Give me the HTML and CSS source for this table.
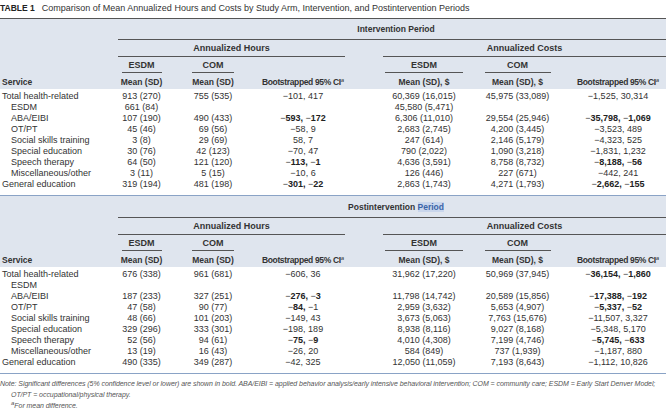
FILE: index.html
```html
<!DOCTYPE html>
<html lang="en">
<head>
<meta charset="utf-8">
<title>Table 1</title>
<link rel="stylesheet" href="styles.css">
</head>
<body>
<p class="title"><b class="tag">TABLE 1</b>Comparison of Mean Annualized Hours and Costs by Study Arm, Intervention, and Postintervention Periods</p>

<table class="tbl tbl-first">
  <colgroup>
    <col class="c-svc"><col class="c-eh"><col class="c-ch"><col class="c-ih"><col class="c-gap"><col class="c-ec"><col class="c-cc"><col class="c-ic">
  </colgroup>
  <thead>
    <tr class="r-period"><th></th><th colspan="7" class="per">Intervention Period</th></tr>
    <tr class="r-group"><th></th><th colspan="3" class="grp">Annualized Hours</th><th></th><th colspan="3" class="grp">Annualized Costs</th></tr>
    <tr class="r-arm"><th></th><th><div class="arm w-eh">ESDM</div></th><th><div class="arm w-ch">COM</div></th><th></th><th></th><th><div class="arm w-ec">ESDM</div></th><th><div class="arm w-cc">COM</div></th><th></th></tr>
    <tr class="r-col"><th class="svc">Service</th><th>Mean (SD)</th><th>Mean (SD)</th><th class="ci">Bootstrapped 95% CI<sup class="fn">a</sup></th><th></th><th>Mean (SD), $</th><th>Mean (SD), $</th><th class="ci">Bootstrapped 95% CI<sup class="fn">a</sup></th></tr>
  </thead>
  <tbody>
    <tr><td class="svc">Total health-related</td><td>913 (270)</td><td>755 (535)</td><td>−101, 417</td><td></td><td>60,369 (16,015)</td><td>45,975 (33,089)</td><td>−1,525, 30,314</td></tr>
    <tr><td class="svc sub">ESDM</td><td>661 (84)</td><td></td><td></td><td></td><td>45,580 (5,471)</td><td></td><td></td></tr>
    <tr><td class="svc sub">ABA/EIBI</td><td>107 (190)</td><td>490 (433)</td><td>−<b>593,</b> −<b>172</b></td><td></td><td>6,306 (11,010)</td><td>29,554 (25,946)</td><td>−<b>35,798,</b> −<b>1,069</b></td></tr>
    <tr><td class="svc sub">OT/PT</td><td>45 (46)</td><td>69 (56)</td><td>−58, 9</td><td></td><td>2,683 (2,745)</td><td>4,200 (3,445)</td><td>−3,523, 489</td></tr>
    <tr><td class="svc sub">Social skills training</td><td>3 (8)</td><td>29 (69)</td><td>58, 7</td><td></td><td>247 (614)</td><td>2,146 (5,179)</td><td>−4,323, 525</td></tr>
    <tr><td class="svc sub">Special education</td><td>30 (76)</td><td>42 (123)</td><td>−70, 47</td><td></td><td>790 (2,022)</td><td>1,090 (3,218)</td><td>−1,831, 1,232</td></tr>
    <tr><td class="svc sub">Speech therapy</td><td>64 (50)</td><td>121 (120)</td><td>−<b>113,</b> −<b>1</b></td><td></td><td>4,636 (3,591)</td><td>8,758 (8,732)</td><td>−<b>8,188,</b> −<b>56</b></td></tr>
    <tr><td class="svc sub">Miscellaneous/other</td><td>3 (11)</td><td>5 (15)</td><td>−10, 6</td><td></td><td>126 (446)</td><td>227 (671)</td><td>−442, 241</td></tr>
    <tr class="last"><td class="svc">General education</td><td>319 (194)</td><td>481 (198)</td><td>−<b>301,</b> −<b>22</b></td><td></td><td>2,863 (1,743)</td><td>4,271 (1,793)</td><td>−<b>2,662,</b> −<b>155</b></td></tr>
  </tbody>
</table>

<table class="tbl tbl-second">
  <colgroup>
    <col class="c-svc"><col class="c-eh"><col class="c-ch"><col class="c-ih"><col class="c-gap"><col class="c-ec"><col class="c-cc"><col class="c-ic">
  </colgroup>
  <thead>
    <tr class="r-period"><th></th><th colspan="7" class="per">Postintervention <span class="sel">Period</span></th></tr>
    <tr class="r-group"><th></th><th colspan="3" class="grp">Annualized Hours</th><th></th><th colspan="3" class="grp">Annualized Costs</th></tr>
    <tr class="r-arm"><th></th><th><div class="arm w-eh">ESDM</div></th><th><div class="arm w-ch">COM</div></th><th></th><th></th><th><div class="arm w-ec">ESDM</div></th><th><div class="arm w-cc">COM</div></th><th></th></tr>
    <tr class="r-col"><th class="svc">Service</th><th>Mean (SD)</th><th>Mean (SD)</th><th class="ci">Bootstrapped 95% CI<sup class="fn">a</sup></th><th></th><th>Mean (SD), $</th><th>Mean (SD), $</th><th class="ci">Bootstrapped 95% CI<sup class="fn">a</sup></th></tr>
  </thead>
  <tbody>
    <tr><td class="svc">Total health-related</td><td>676 (338)</td><td>961 (681)</td><td>−606, 36</td><td></td><td>31,962 (17,220)</td><td>50,969 (37,945)</td><td>−<b>36,154,</b> −<b>1,860</b></td></tr>
    <tr><td class="svc sub">ESDM</td><td></td><td></td><td></td><td></td><td></td><td></td><td></td></tr>
    <tr><td class="svc sub">ABA/EIBI</td><td>187 (233)</td><td>327 (251)</td><td>−<b>276,</b> −<b>3</b></td><td></td><td>11,798 (14,742)</td><td>20,589 (15,856)</td><td>−<b>17,388,</b> −<b>192</b></td></tr>
    <tr><td class="svc sub">OT/PT</td><td>47 (58)</td><td>90 (77)</td><td>−<b>84,</b> −1</td><td></td><td>2,959 (3,632)</td><td>5,653 (4,907)</td><td>−<b>5,337,</b> −<b>52</b></td></tr>
    <tr><td class="svc sub">Social skills training</td><td>48 (66)</td><td>101 (203)</td><td>−149, 43</td><td></td><td>3,673 (5,063)</td><td>7,763 (15,676)</td><td>−11,507, 3,327</td></tr>
    <tr><td class="svc sub">Special education</td><td>329 (296)</td><td>333 (301)</td><td>−198, 189</td><td></td><td>8,938 (8,116)</td><td>9,027 (8,168)</td><td>−5,348, 5,170</td></tr>
    <tr><td class="svc sub">Speech therapy</td><td>52 (56)</td><td>94 (61)</td><td>−<b>75,</b> −<b>9</b></td><td></td><td>4,010 (4,308)</td><td>7,199 (4,746)</td><td>−<b>5,745,</b> −<b>633</b></td></tr>
    <tr><td class="svc sub">Miscellaneous/other</td><td>13 (19)</td><td>16 (43)</td><td>−26, 20</td><td></td><td>584 (849)</td><td>737 (1,939)</td><td>−1,187, 880</td></tr>
    <tr class="last"><td class="svc">General education</td><td>490 (335)</td><td>349 (287)</td><td>−42, 325</td><td></td><td>12,050 (11,059)</td><td>7,193 (8,643)</td><td>−1,112, 10,826</td></tr>
  </tbody>
</table>

<div class="notes">
  <p class="note">Note: Significant differences (5% confidence level or lower) are shown in bold. ABA/EIBI = applied behavior analysis/early intensive behavioral intervention; COM = community care; ESDM = Early Start Denver Model;</p>
  <p class="note ind">OT/PT = occupational/physical therapy.</p>
  <p class="note ind"><sup class="fn">a</sup>For mean difference.</p>
</div>
</body>
</html>
```

FILE: styles.css
```css
html, body {
  margin: 0;
  padding: 0;
  background: #ffffff;
}

body {
  width: 666px;
  overflow: hidden;
  color: #2e2e2e;
  font-family: "Liberation Sans", Arial, sans-serif;
  font-size: 9px;
}

.title {
  margin: 0;
  height: 18px;
  line-height: 16px;
  white-space: nowrap;
  font-size: 9px;
  color: #333;
}

.tag {
  font-size: 8.5px;
  font-weight: bold;
  margin-right: 7px;
  color: #222;
}

.tbl {
  width: 666px;
  border-collapse: collapse;
  border-spacing: 0;
  table-layout: fixed;
}

.c-svc { width: 118px; }
.c-eh  { width: 47px; }
.c-ch  { width: 96px; }
.c-ih  { width: 84px; }
.c-gap { width: 38px; }
.c-ec  { width: 82px; }
.c-cc  { width: 105px; }
.c-ic  { width: 96px; }

.tbl th,
.tbl td {
  padding: 0;
  text-align: center;
  white-space: nowrap;
  overflow: visible;
}

.tbl thead th {
  background: #dfe5ee;
  font-weight: bold;
  color: #333;
}

.tbl-first thead tr:first-child th {
  border-top: 1px solid #555;
}

.r-period th { height: 20px; vertical-align: middle; }
.tbl-second .r-period th { height: 21px; }
.r-group th { height: 16px; vertical-align: middle; }
.r-arm th { height: 17px; vertical-align: bottom; }
.r-col th { height: 15px; vertical-align: middle; font-size: 8.5px; }

.tbl .ci {
  font-size: 8.5px;
  letter-spacing: -0.35px;
}

.per {
  font-size: 8.5px;
  padding-left: 8px;
  border-bottom: 1px solid #555;
}

.tbl .per {
  padding-left: 8px;
}

.grp {
  border-bottom: 1px solid #555;
}

.arm {
  margin: 0 auto 1px;
  padding-bottom: 2px;
  border-bottom: 1px solid #555;
  line-height: 10px;
}

.w-eh { width: 40px; }
.w-ch { width: 42px; }
.w-ec { width: 78px; }
.w-cc { width: 66px; }

.tbl .svc {
  text-align: left;
  padding-left: 2px;
}

.tbl td.sub {
  padding-left: 11px;
}

.tbl tbody td {
  height: 11px;
  line-height: 11px;
  color: #333;
}

.tbl tbody tr:first-child td {
  padding-top: 2px;
}

.tbl tbody tr.last td {
  border-bottom: 1px solid #8aa3c6;
  padding-bottom: 5px;
}

.tbl b {
  font-weight: bold;
  color: #222;
}

.fn {
  font-size: 6px;
  font-style: italic;
  font-weight: normal;
  vertical-align: top;
  line-height: 6px;
  letter-spacing: 0;
}

.sel {
  color: #3b64a8;
  background: #c9d6ec;
}

.notes {
  padding-top: 4px;
}

.note {
  margin: 0;
  font-size: 7px;
  line-height: 11px;
  letter-spacing: -0.06px;
  font-style: italic;
  color: #555;
  white-space: nowrap;
}

.note.ind {
  padding-left: 11px;
}
```
